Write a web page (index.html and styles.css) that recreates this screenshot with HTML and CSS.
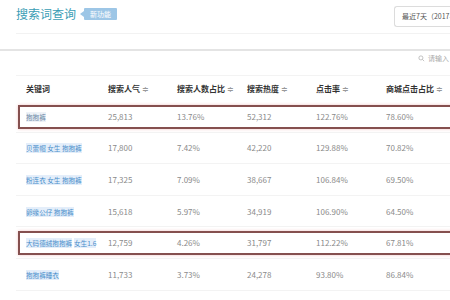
FILE: index.html
```html
<!doctype html>
<html lang="zh-CN">

<head>
  <meta charset="UTF-8" />
  <meta name="viewport" content="width=device-width, initial-scale=1.0" />
  <title>搜索词查询</title>
  <link rel="stylesheet" href="styles.css">
</head>

<body>
  <div class="page">
    <header class="header">
      <div class="title-group">
        <span class="title">搜索词查询</span>
        <span class="badge">新功能</span>
      </div>
      <div class="date-box">最近7天（2017-10-01~2017-10-07）</div>
    </header>
    <div class="divider"></div>
    <div class="search-hint">
      <svg class="search-icon" viewBox="0 0 12 12" fill="none" stroke="currentColor" stroke-width="1.2">
        <circle cx="5" cy="5" r="3.5"></circle>
        <path d="M7.6 7.6L10.5 10.5"></path>
      </svg>
      <span>请输入</span>
    </div>

    <div class="table">
      <div class="row head">
        <div class="cell">关键词</div>
        <div class="cell">搜索人气 <span class="sort">≑</span></div>
        <div class="cell">搜索人数占比 <span class="sort">≑</span></div>
        <div class="cell">搜索热度 <span class="sort">≑</span></div>
        <div class="cell">点击率 <span class="sort">≑</span></div>
        <div class="cell">商城点击占比 <span class="sort">≑</span></div>
      </div>
      <div class="row marked">
        <div class="cell"><span class="kw plain">抱抱裤</span></div>
        <div class="cell">25,813</div>
        <div class="cell">13.76%</div>
        <div class="cell">52,312</div>
        <div class="cell">122.76%</div>
        <div class="cell">78.60%</div>
      </div>
      <div class="row">
        <div class="cell"><span class="kw">贝蕾帽 女生 抱抱裤</span></div>
        <div class="cell">17,800</div>
        <div class="cell">7.42%</div>
        <div class="cell">42,220</div>
        <div class="cell">129.88%</div>
        <div class="cell">70.82%</div>
      </div>
      <div class="row">
        <div class="cell"><span class="kw">粉连衣 女生 抱抱裤</span></div>
        <div class="cell">17,325</div>
        <div class="cell">7.09%</div>
        <div class="cell">38,667</div>
        <div class="cell">106.84%</div>
        <div class="cell">69.50%</div>
      </div>
      <div class="row">
        <div class="cell"><span class="kw">卵缘公仔 抱抱裤</span></div>
        <div class="cell">15,618</div>
        <div class="cell">5.97%</div>
        <div class="cell">34,919</div>
        <div class="cell">106.90%</div>
        <div class="cell">64.50%</div>
      </div>
      <div class="row marked">
        <div class="cell"><span class="kw">大码德绒抱抱裤</span> <span class="kw">女生1.6</span></div>
        <div class="cell">12,759</div>
        <div class="cell">4.26%</div>
        <div class="cell">31,797</div>
        <div class="cell">112.22%</div>
        <div class="cell">67.81%</div>
      </div>
      <div class="row">
        <div class="cell"><span class="kw">抱抱裤睡衣</span></div>
        <div class="cell">11,733</div>
        <div class="cell">3.73%</div>
        <div class="cell">24,278</div>
        <div class="cell">93.80%</div>
        <div class="cell">86.84%</div>
      </div>
      <div class="row">
        <div class="cell"><span class="kw">抱抱裤女 秋冬 加绒</span></div>
        <div class="cell">10,946</div>
        <div class="cell">3.61%</div>
        <div class="cell">23,567</div>
        <div class="cell">102.45%</div>
        <div class="cell">75.20%</div>
      </div>
    </div>
  </div>
</body>

</html>
```

FILE: styles.css
```css
* {
  margin: 0;
  padding: 0;
  box-sizing: border-box;
}

body {
  background-color: #ffffff;
  font-family: "Noto Sans CJK SC", "Noto Sans", sans-serif;
  width: 450px;
  height: 300px;
  overflow: hidden;
}

.page {
  width: 450px;
}

.header {
  height: 34px;
  margin-left: 16px;
  border-bottom: 1px solid #f2f2f2;
  display: flex;
  justify-content: space-between;
  align-items: flex-start;
  padding-top: 5px;
}

.title-group {
  display: flex;
  align-items: center;
  gap: 8px;
}

.title {
  font-size: 12px;
  line-height: 18px;
  color: #3a9db5;
}

.badge {
  position: relative;
  background-color: #9dc6e6;
  color: #ffffff;
  font-size: 7px;
  line-height: 12px;
  padding: 0 6px;
  border-radius: 1px;
}

.badge::before {
  content: "";
  position: absolute;
  left: -4px;
  top: 3px;
  border-top: 3px solid transparent;
  border-bottom: 3px solid transparent;
  border-right: 4px solid #9dc6e6;
}

.date-box {
  margin-top: 1px;
  height: 21px;
  width: 56px;
  border: 1px solid #dcdcdc;
  border-right: none;
  border-radius: 3px 0 0 3px;
  padding-left: 7px;
  font-size: 7px;
  line-height: 19px;
  color: #555;
  white-space: nowrap;
  overflow: hidden;
}

.divider {
  height: 2px;
  margin-top: 15px;
  background-color: #e4e4e4;
}

.search-hint {
  display: flex;
  align-items: center;
  gap: 3px;
  padding-left: 418px;
  margin-top: 2px;
  font-size: 7px;
  line-height: 10px;
  color: #aaa;
  white-space: nowrap;
}

.search-icon {
  width: 7px;
  height: 7px;
  flex-shrink: 0;
}

.table {
  margin-left: 16px;
  margin-top: 12px;
}

.row {
  position: relative;
  display: grid;
  grid-template-columns: 82px 69px 70px 69px 70px 90px;
  height: 31.6px;
  align-items: center;
  border-bottom: 1px solid #f3f3f3;
  font-size: 8px;
  color: #8a8a8a;
  white-space: nowrap;
}

.row.head {
  height: 26px;
  border-top: 1px solid #f3f3f3;
  border-bottom: none;
  color: #333;
  font-weight: bold;
}

.row.marked::after {
  content: "";
  position: absolute;
  left: 2px;
  right: -20px;
  top: 4px;
  bottom: 3px;
  border: 2px solid #85504f;
  box-shadow: 0 0 3px #f2c6c6;
}

.cell {
  padding-left: 10px;
  overflow: hidden;
}

.sort {
  color: #999;
  font-weight: normal;
}

.kw {
  font-size: 6.6px;
  color: #4a8fcb;
  background-color: #e4eefa;
}

.kw.plain {
  color: #6b87a6;
  background-color: #eef2f7;
}
```
